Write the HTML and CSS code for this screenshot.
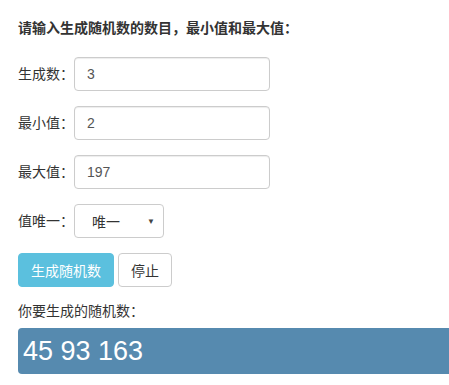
FILE: index.html
```html
<!DOCTYPE html>
<html lang="zh">
<head>
<meta charset="UTF-8">
<title>随机数生成</title>
<link rel="stylesheet" href="styles.css">
</head>
<body>
<div class="page">
  <p class="title">请输入生成随机数的数目，最小值和最大值：</p>

  <div class="row">
    <label class="lbl">生成数：</label>
    <input class="field" type="text" value="3">
  </div>
  <div class="row">
    <label class="lbl">最小值：</label>
    <input class="field" type="text" value="2">
  </div>
  <div class="row">
    <label class="lbl">最大值：</label>
    <input class="field" type="text" value="197">
  </div>
  <div class="row">
    <label class="lbl">值唯一：</label>
    <div class="pick">
      <span>唯一</span>
      <span class="arrow">▼</span>
    </div>
  </div>

  <div class="btns">
    <button class="btn btn-info">生成随机数</button>
    <button class="btn">停止</button>
  </div>

  <p class="note">你要生成的随机数：</p>
  <div class="result">45 93 163</div>
</div>
</body>
</html>
```

FILE: styles.css
```css
body {
  margin: 0;
  font-family: "Liberation Sans", "Noto Sans CJK SC", sans-serif;
  font-size: 14px;
  color: #333;
  background: #fff;
  overflow: hidden;
}
.page {
  padding: 18px 0 0 18px;
}
.title {
  margin: 0 0 19px;
  font-weight: bold;
  font-size: 14px;
  line-height: 20px;
}
.row {
  display: flex;
  align-items: center;
  margin-bottom: 15px;
}
.lbl {
  width: 56px;
  line-height: 20px;
}
.field {
  width: 196px;
  height: 34px;
  box-sizing: border-box;
  padding: 6px 12px;
  border: 1px solid #ccc;
  border-radius: 4px;
  font-family: inherit;
  font-size: 14px;
  color: #555;
  box-shadow: inset 0 1px 1px rgba(0, 0, 0, 0.075);
}
.pick {
  width: 90px;
  height: 34px;
  box-sizing: border-box;
  border: 1px solid #ccc;
  border-radius: 4px;
  display: flex;
  align-items: center;
  justify-content: space-between;
  padding: 0 8px 0 17px;
  color: #333;
}
.arrow {
  font-size: 8px;
  color: #444;
}
.btns {
  display: flex;
  gap: 4px;
  margin-top: 1px;
}
.btn {
  height: 34px;
  padding: 0 12px;
  border: 1px solid #ccc;
  border-radius: 4px;
  background: #fff;
  color: #333;
  font-family: inherit;
  font-size: 14px;
}
.btn-info {
  width: 96px;
  background: #5bc0de;
  border-color: #5bc0de;
  color: #fff;
}
.note {
  margin: 14px 0 7px;
  line-height: 20px;
}
.result {
  height: 46px;
  box-sizing: border-box;
  margin-right: -10px;
  padding: 3px 5px;
  background: #568aaf;
  border-radius: 4px;
  color: #fff;
  font-size: 27px;
  line-height: 40px;
}
```
